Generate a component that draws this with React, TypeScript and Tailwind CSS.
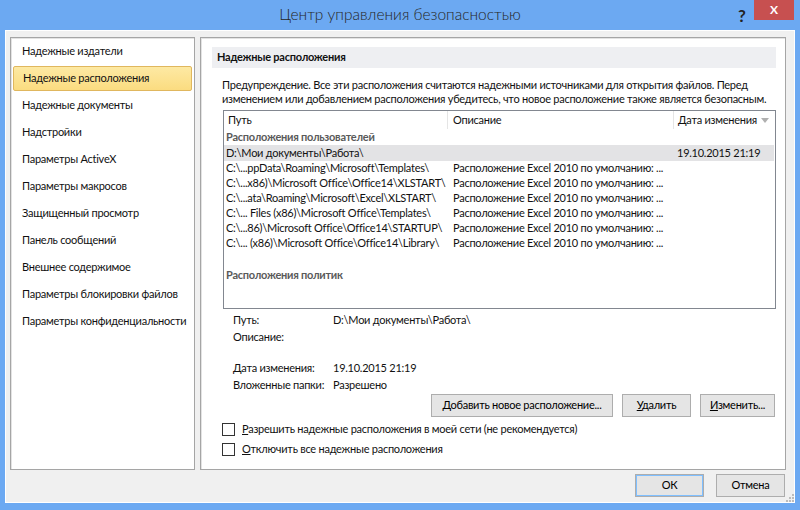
import React from "react";

const navItems = [
	"Надежные издатели",
	"Надежные расположения",
	"Надежные документы",
	"Надстройки",
	"Параметры ActiveX",
	"Параметры макросов",
	"Защищенный просмотр",
	"Панель сообщений",
	"Внешнее содержимое",
	"Параметры блокировки файлов",
	"Параметры конфиденциальности",
];

const defaultDesc = "Расположение Excel 2010 по умолчанию: ...";

const rows = [
	{ path: "C:\\...ppData\\Roaming\\Microsoft\\Templates\\", desc: defaultDesc },
	{ path: "C:\\...x86)\\Microsoft Office\\Office14\\XLSTART\\", desc: defaultDesc },
	{ path: "C:\\...ata\\Roaming\\Microsoft\\Excel\\XLSTART\\", desc: defaultDesc },
	{ path: "C:\\... Files (x86)\\Microsoft Office\\Templates\\", desc: defaultDesc },
	{ path: "C:\\...86)\\Microsoft Office\\Office14\\STARTUP\\", desc: defaultDesc },
	{ path: "C:\\... (x86)\\Microsoft Office\\Office14\\Library\\", desc: defaultDesc },
];

function Button({ children, className = "" }: { children: React.ReactNode; className?: string }) {
	return (
		<button
			className={
				"h-[23px] border border-[#adadad] bg-[#e5e5e5] text-black flex items-center justify-center whitespace-nowrap " +
				className
			}
		>
			<span>{children}</span>
		</button>
	);
}

function Checkbox({ first, rest }: { first: string; rest: string }) {
	return (
		<div className="flex items-center h-[20px]">
			<div className="w-[13px] h-[13px] border border-[#333] bg-white" />
			<span className="ml-[7px] whitespace-nowrap">
				<span className="underline">{first}</span>
				{rest}
			</span>
		</div>
	);
}

export default function App() {
	return (
		<div className="w-[800px] h-[510px] bg-[#6ca9f2] flex flex-col font-['Lato',sans-serif] text-[11px] tracking-[-0.25px] text-[#111] overflow-hidden">
			{/* title bar */}
			<div className="h-[30px] relative flex items-center justify-center">
				<span className="text-[15.5px] tracking-normal font-light text-[#262626]">Центр управления безопасностью</span>
				<span className="absolute left-[738px] top-[3px] text-[17px] font-bold text-[#222]">?</span>
				<div className="absolute left-[754px] top-0 w-[40px] h-[20px] bg-[#c75050] flex items-center justify-center text-white text-[12px] font-bold">
					X
				</div>
			</div>

			{/* client area */}
			<div className="mx-[5px] mb-[7px] flex-1 bg-[#f0f0f0] border border-white flex flex-col whitespace-nowrap">
				<div className="flex gap-[5px] pl-[4px] pr-[8px] pt-[6px] h-[439px]">
					{/* left nav */}
					<div className="w-[185px] shrink-0 bg-white border border-[#a5a5a5] shadow-[inset_1px_1px_0_#e3e3e3] overflow-hidden">
						{navItems.map((item, i) => (
							<div key={item} className="h-[27px] flex items-center">
								{i === 1 ? (
									<div className="ml-[2px] mr-[2px] flex-1 h-[25px] flex items-center pl-[9px] rounded-[2px] border border-[#e0b75e] bg-gradient-to-b from-[#fde9a3] to-[#fbdc80]">
										{item}
									</div>
								) : (
									<span className="pl-[11px]">{item}</span>
								)}
							</div>
						))}
					</div>

					{/* right content */}
					<div className="flex-1 min-w-0 overflow-hidden bg-white border border-[#a5a5a5] shadow-[inset_1px_1px_0_#e3e3e3] pt-[9px] pl-[11px] pr-[9px]">
						<div className="h-[21px] bg-[#eeeff2] flex items-center pl-[5px] font-bold">Надежные расположения</div>

						<div className="pl-[10px] mt-[10px] leading-[14px]">
							Предупреждение. Все эти расположения считаются надежными источниками для открытия файлов. Перед
							<br />
							изменением или добавлением расположения убедитесь, что новое расположение также является безопасным.
						</div>

						{/* list view */}
						<div className="ml-[11px] mt-[4px] h-[199px] border border-[#828790] bg-white overflow-hidden">
							<div className="h-[18px] flex items-center">
								<div className="w-[224px] h-full pl-[4px] flex items-center border-r border-[#e5e5e5]">Путь</div>
								<div className="w-[226px] h-full pl-[5px] flex items-center border-r border-[#e5e5e5]">Описание</div>
								<div className="flex-1 h-full pl-[4px] flex items-center justify-between pr-[6px]">
									<span>Дата изменения</span>
									<svg width="8" height="5" viewBox="0 0 8 5">
										<path d="M0 0 L8 0 L4 5 Z" fill="#b0b0b0" />
									</svg>
								</div>
							</div>
							<div className="h-[16px] pl-[2px] flex items-center font-bold text-[#5a5a5a]">Расположения пользователей</div>
							<div className="h-[16px] flex items-center bg-[#e3e3e5] mr-[1px]">
								<div className="w-[450px] pl-[2px]">D:\Мои документы\Работа\</div>
								<div className="pl-[3px]">19.10.2015 21:19</div>
							</div>
							{rows.map((r) => (
								<div key={r.path} className="h-[15px] flex items-center">
									<div className="w-[224px] pl-[2px] overflow-hidden">{r.path}</div>
									<div className="pl-[5px]">{r.desc}</div>
								</div>
							))}
							<div className="h-[16px] mt-[16px] pl-[2px] flex items-center font-bold text-[#5a5a5a]">Расположения политик</div>
						</div>

						{/* details */}
						<div className="ml-[21px] mt-[2px] leading-[17px]">
							<div className="flex">
								<span className="w-[100px]">Путь:</span>
								<span>D:\Мои документы\Работа\</span>
							</div>
							<div className="flex">
								<span className="w-[100px]">Описание:</span>
							</div>
							<div className="flex mt-[14px]">
								<span className="w-[100px]">Дата изменения:</span>
								<span>19.10.2015 21:19</span>
							</div>
							<div className="flex">
								<span className="w-[100px]">Вложенные папки:</span>
								<span>Разрешено</span>
							</div>
						</div>

						<div className="flex justify-end gap-[9px] mt-[1px] mr-[1px]">
							<Button className="w-[182px]">
								<span className="underline">Д</span>обавить новое расположение...
							</Button>
							<Button className="w-[69px]">
								<span className="underline">У</span>далить
							</Button>
							<Button className="w-[75px]">
								<span className="underline">И</span>зменить...
							</Button>
						</div>

						<div className="ml-[10px] mt-[2px]">
							<Checkbox first="Р" rest="азрешить надежные расположения в моей сети (не рекомендуется)" />
							<Checkbox first="О" rest="тключить все надежные расположения" />
						</div>
					</div>
				</div>

				{/* footer */}
				<div className="relative flex justify-end gap-[12px] pr-[9px] mt-[4px] flex-1">
					<Button className="w-[69px] h-[21px] border-[#3399ff] shadow-[inset_0_0_0_1px_#7fbfff]">ОК</Button>
					<Button className="w-[69px] h-[21px]">Отмена</Button>
					{/* resize grip */}
					<svg className="absolute right-0 bottom-0" width="8" height="8" viewBox="0 0 8 8">
						<rect x="6" y="0" width="2" height="2" fill="#bcbcbc" />
						<rect x="3" y="3" width="2" height="2" fill="#bcbcbc" />
						<rect x="6" y="3" width="2" height="2" fill="#bcbcbc" />
						<rect x="0" y="6" width="2" height="2" fill="#bcbcbc" />
						<rect x="3" y="6" width="2" height="2" fill="#bcbcbc" />
						<rect x="6" y="6" width="2" height="2" fill="#bcbcbc" />
					</svg>
				</div>
			</div>
		</div>
	);
}
